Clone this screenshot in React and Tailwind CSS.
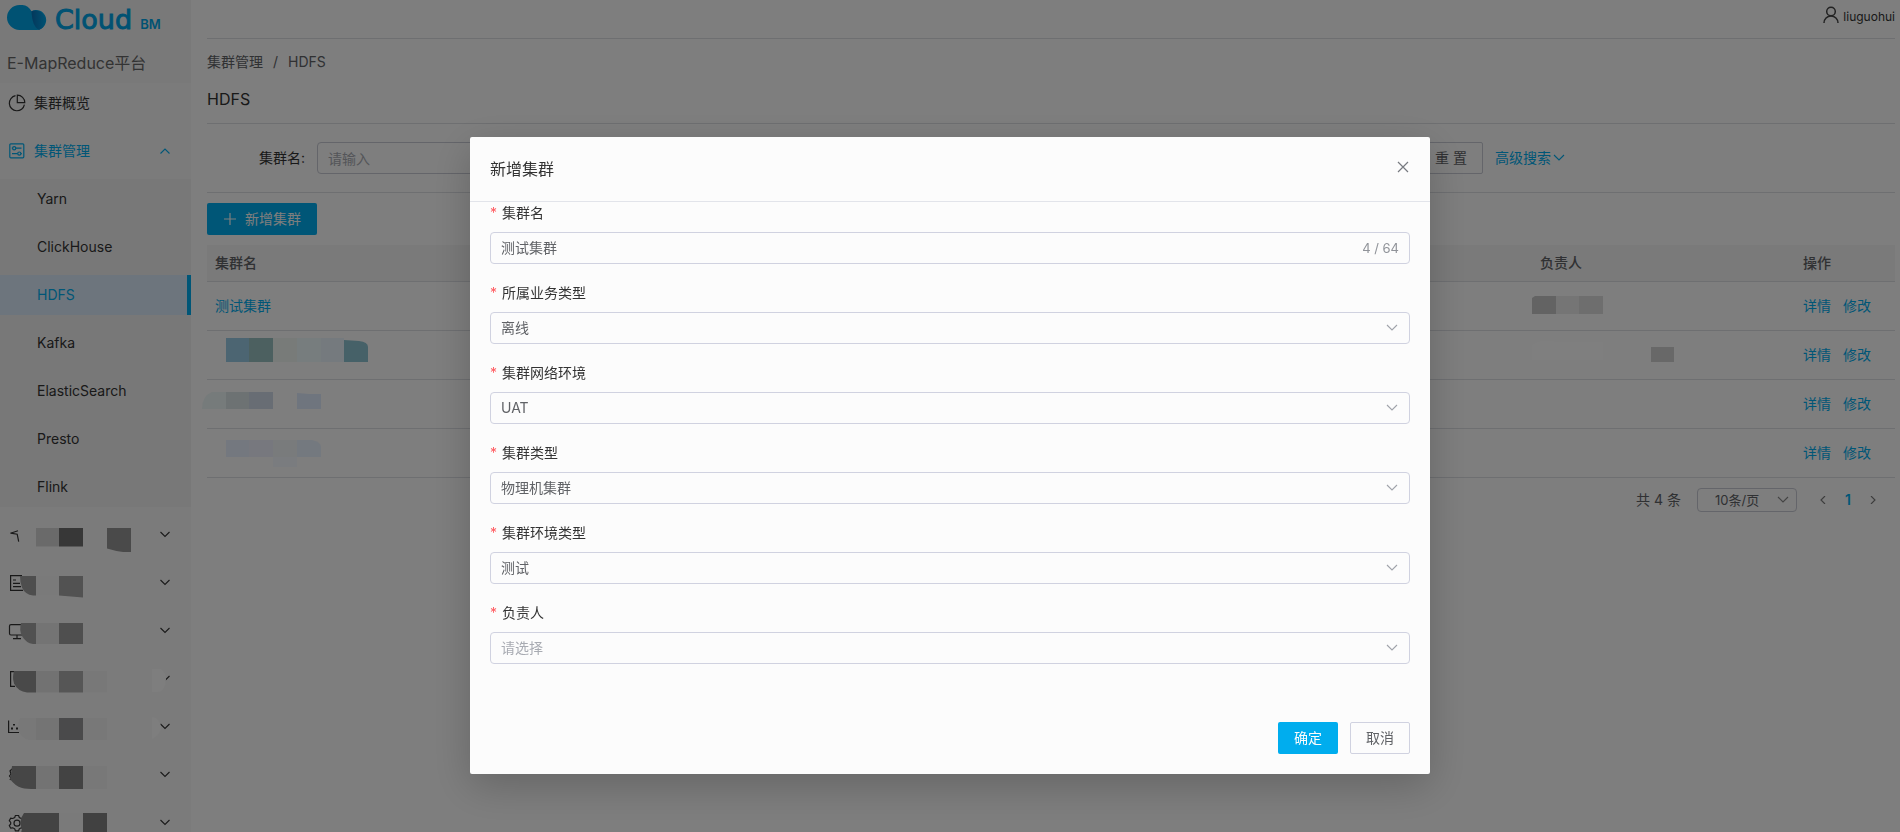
import React, { useState } from "react";

const subMenu = ["Yarn", "ClickHouse", "HDFS", "Kafka", "ElasticSearch", "Presto", "Flink"];

const rows = [1, 2, 3, 4];

const selectFields = [
  { id: "business", label: "所属业务类型", options: ["离线", "实时"] },
  { id: "network", label: "集群网络环境", options: ["UAT", "PROD"] },
  { id: "kind", label: "集群类型", options: ["物理机集群", "云主机集群"] },
  { id: "env", label: "集群环境类型", options: ["测试", "生产"] },
  { id: "owner", label: "负责人", options: [], placeholder: "请选择" },
];

function Chevron({ className, d = "M1 1l5 5 5-5" }) {
  return (
    <svg
      className={className}
      width="12"
      height="8"
      viewBox="0 0 12 8"
      fill="none"
      stroke="currentColor"
      strokeWidth="1.1"
      aria-hidden="true"
    >
      <path d={d} />
    </svg>
  );
}

function CloudMark() {
  return (
    <svg width="40" height="26" viewBox="0 0 40 26" aria-hidden="true">
      <defs>
        <linearGradient id="lobe" x1="0" y1="0" x2="1" y2="0">
          <stop offset="0" stopColor="#0870b8" />
          <stop offset="1" stopColor="#00a2e4" />
        </linearGradient>
      </defs>
      <path
        d="M12.500 0A12.500 12.500 0 0 0 12.500 25H30A10 10 0 1 0 24.500 6.200A12.500 12.500 0 0 0 12.500 0Z"
        fill="#00a5e6"
      />
      <path d="M24.500 6.200A10 10 0 1 1 32 25C27 22 25 16 24.500 6.200Z" fill="url(#lobe)" />
    </svg>
  );
}

function PieIcon() {
  return (
    <svg width="18" height="18" viewBox="0 0 18 18" fill="none" stroke="currentColor" strokeWidth="1.2" aria-hidden="true">
      <path d="M7.500 1.700A7.600 7.600 0 1 0 16.400 10.600" />
      <path d="M9.300 1.200V8.700H16.800A7.500 7.500 0 0 0 9.300 1.200Z" />
    </svg>
  );
}

function ControlIcon() {
  return (
    <svg width="18" height="18" viewBox="0 0 18 18" fill="none" stroke="currentColor" strokeWidth="1.2" aria-hidden="true">
      <rect x="1.800" y="1.800" width="14" height="14" rx="1" />
      <circle cx="6.200" cy="6.200" r="1.600" />
      <path d="M8 6.200h5.500M4 11.600h5.500M3.800 6.200h.8M13 11.600h.8" />
      <circle cx="11.300" cy="11.600" r="1.600" />
    </svg>
  );
}

// Obscured sidebar entries: partial icon plus grey tiles
const maskedItems = [
  {
    icon: <path d="M18 15.700L10.500 18.200L17.200 19.200L18.700 26.700" />,
    tiles: (
      <>
        <path d="M36 13h23v18.500H36z" fill="#d4d4d4" />
        <path d="M59 13h24v18.500H59z" fill="#6e6e6e" />
        <path d="M107 13h24v24h-8q-8-1-16-3.500z" fill="#949494" />
      </>
    ),
  },
  {
    icon: <path d="M22 12.600H10.600V27.400H23M13 17h3M13 20.300h7M13 23.700h8" />,
    tiles: (
      <>
        <path d="M20 13h16v19.500h-3q-8-1-11-8q-2-5-2-11.500z" fill="#9c9c9c" />
        <path d="M36 13h23v19.500H36z" fill="#f4f4f4" />
        <path d="M59 13h24v21.500l-24-2z" fill="#a4a4a4" />
      </>
    ),
  },
  {
    icon: <path d="M22 13.600H11q-1.500 0-1.500 1.500V22.500q0 1.500 1.500 1.500H23M17 24v3.600M13 27.600h8" />,
    tiles: (
      <>
        <path d="M21 12h15v21h-3q-7-1-11-8q-3-6-1-13z" fill="#a2a2a2" />
        <path d="M36 12h23v21H36z" fill="#e8e8e8" />
        <path d="M59 12h24v21H59z" fill="#9e9e9e" />
      </>
    ),
  },
  {
    icon: <path d="M14 12.600H10.600V27.400H15" />,
    tiles: (
      <>
        <path d="M14 12h22v21.500H27q-9-1-13-9q-2-6 0-12.500z" fill="#929292" />
        <path d="M36 12h23v21.500H36z" fill="#e4e4e4" />
        <path d="M59 12h24v21.500H59z" fill="#acacac" />
        <path d="M83 12h24v21.500H83z" fill="#f1f1f1" />
      </>
    ),
    cover: <path d="M-7 -6H2Q7 -2 7 5Q6 16 -1 17H-7Z" fill="#fcfcfc" />,
  },
  {
    icon: (
      <>
        <path d="M8.600 13.500V25.500H19" />
        <path d="M12 20.500v2M17 20.500v2M14 17v1.500" strokeWidth="2" />
      </>
    ),
    tiles: (
      <>
        <path d="M20 11h16v22H29q-9-2-11-12q0-6 2-10z" fill="#f0f0f0" />
        <path d="M36 11h23v22H36z" fill="#e8e8e8" />
        <path d="M59 11h24v22H59z" fill="#949496" />
        <path d="M83 11h24v22H83z" fill="#f0f0f0" />
      </>
    ),
    cover: <path d="M-7 -6Q1 -5 2 5Q0 13 -7 16Z" fill="#fcfcfc" />,
  },
  {
    icon: <path d="M12 14l-2 2 1 3-1.500 2 1.500 2-1 2" />,
    tiles: (
      <>
        <path d="M12 11h24v23q-10 0-14-1q-7-2-12-9l1-5z" fill="#8c8c8c" />
        <path d="M36 11h23v23H36z" fill="#e6e6e6" />
        <path d="M59 11h24v23H59z" fill="#868686" />
        <path d="M83 11h24v23H83z" fill="#f0f0f0" />
      </>
    ),
  },
  {
    icon: (
      <>
        <path d="M14.700 14.500L15.400 12.500H18.600L19.300 14.500L21.200 15.500L23.300 15.200L24.700 17.700L23.300 19.400V21L24.700 22.600L23.300 25.200L21.200 24.800L19.300 25.800L18.600 27.800H15.400L14.700 25.800L12.800 24.800L10.700 25.200L9.300 22.600L10.700 21V19.400L9.300 17.700L10.700 15.200L12.800 15.500Z" />
        <circle cx="17" cy="20.200" r="3" />
      </>
    ),
    tiles: (
      <>
        <path d="M24 10h35v30H22q-2-8 0-14q-4-8 2-16z" fill="#868686" />
        <path d="M59 10h24v30H59z" fill="#f5f5f5" />
        <path d="M83 10h24v30H83z" fill="#828282" />
      </>
    ),
  },
];

const nameTiles = {
  2: (
    <>
      <path d="M11 -4h24v24H11z" fill="#98cae4" />
      <path d="M34 -4h24v24H34z" fill="#98c0c0" />
      <path d="M58 -4h24v24H58z" fill="#f0f6f2" />
      <path d="M82 -4h24v24H82z" fill="#eefafc" />
      <path d="M106 -4h23v24h-23z" fill="#eaf4fc" />
      <path d="M129 -2l15 1q9 1 9 6v15h-24z" fill="#8cc2d0" />
    </>
  ),
  3: (
    <>
      <path d="M11 1v17H-13q0-13 10-17z" fill="#ecf6f6" />
      <path d="M11 1h24v17H11z" fill="#dae4e6" />
      <path d="M34 1h24v17H34z" fill="#d0dae8" />
      <path d="M82 2l12 1h12v15H82z" fill="#dfeafc" />
    </>
  ),
  4: (
    <>
      <path d="M11 0h24v17H11z" fill="#e8f0ff" />
      <path d="M34 0h24v17H34z" fill="#eff1fc" />
      <path d="M58 0h24v17H58z" fill="#f2f6f8" />
      <path d="M82 0h15q9 2 9 7v10H82z" fill="#e8f2fe" />
      <path d="M58 17h24v10H58z" fill="#f5f8ff" />
    </>
  ),
};

const ownerTiles = {
  1: (
    <>
      <path d="M-5 3h21v18H-8V5z" fill="#c6c6c6" />
      <path d="M16 3h23v18H16z" fill="#ebebeb" />
      <path d="M39 3h24v18H39z" fill="#dddddd" />
    </>
  ),
  2: (
    <>
      <path d="M-8 3q12-7 24-3h47v18H-8z" fill="#ffffff" />
      <path d="M111 5h23v15h-23z" fill="#d0d0d0" />
    </>
  ),
};

function Tiles({ children }) {
  return (
    <svg className="block overflow-visible" width="160" height="26" viewBox="0 0 160 26" aria-hidden="true">
      {children}
    </svg>
  );
}

function Sidebar() {
  return (
    <aside className="h-screen w-[191px] shrink-0 overflow-hidden bg-[#f7f7f7] text-sm text-[#333]">
      <div className="h-[83px] bg-[#f3f3f3] pl-[7px]">
        <a href="#home" className="flex h-10 items-start gap-2 pt-[5px] text-[#00a5e6]">
          <CloudMark />
          <span className="flex items-baseline gap-2">
            <span className="font-['DejaVu_Sans'] text-[27px] leading-[30px] [-webkit-text-stroke:1px_#00a5e6]">Cloud</span>
            <span className="text-[13px] font-semibold">BM</span>
          </span>
        </a>
        <div className="pt-[11px] text-base leading-6 text-[#666]">E-MapReduce平台</div>
      </div>
      <nav className="flex flex-col gap-2">
        <a href="#overview" className="flex h-10 items-center gap-2 pl-2">
          <PieIcon />
          集群概览
        </a>
        <button type="button" className="flex h-10 w-full items-center gap-2 pr-5 pl-2 text-[#00adee]">
          <ControlIcon />
          集群管理
          <Chevron className="ml-auto" d="M1.500 6.500l4.500-4.500 4.500 4.500" />
        </button>
        <ul className="flex flex-col gap-2 bg-[#f1f1f1]">
          {subMenu.map((name) => (
            <li key={name}>
              <a
                href={`#${name}`}
                className={
                  name === "HDFS"
                    ? "flex h-10 items-center border-r-4 border-[#00adee] bg-[#dbebfa] pl-[37px] text-[#00adee]"
                    : "flex h-10 items-center pl-[37px]"
                }
              >
                {name}
              </a>
            </li>
          ))}
        </ul>
        {maskedItems.map((item, i) => (
          <button key={i} type="button" aria-label={`菜单 ${i + 1}`} className="flex h-10 w-full shrink-0 items-center justify-between pr-5">
            <svg width="136" height="40" viewBox="0 0 136 40" aria-hidden="true">
              <g fill="none" stroke="#333" strokeWidth="1.200">
                {item.icon}
              </g>
              {item.tiles}
            </svg>
            <svg className="overflow-visible" width="12" height="8" viewBox="0 0 12 8" fill="none" aria-hidden="true">
              <path d="M1.500 1l4.500 4.500 4.500-4.500" stroke="#333" strokeWidth="1.100" />
              {item.cover}
            </svg>
          </button>
        ))}
      </nav>
    </aside>
  );
}

function ClusterTable() {
  return (
    <table className="mt-[10px] w-full table-fixed text-left">
      <colgroup>
        <col />
        <col className="w-[263px]" />
        <col className="w-[100px]" />
      </colgroup>
      <thead className="bg-[#f4f4f4] text-[#606266]">
        <tr className="h-9 border-b border-[#dcdee3]">
          <th className="px-2 font-medium">集群名</th>
          <th className="px-2 font-medium">负责人</th>
          <th className="px-2 font-medium">操作</th>
        </tr>
      </thead>
      <tbody>
        {rows.map((row) => (
          <tr key={row} className="h-[49px] border-b border-[#dcdee3]">
            <td className="px-2">
              {row === 1 ? (
                <a href="#cluster" className="text-[#00adee]">
                  测试集群
                </a>
              ) : (
                <Tiles>{nameTiles[row]}</Tiles>
              )}
            </td>
            <td className="px-2">{ownerTiles[row] && <Tiles>{ownerTiles[row]}</Tiles>}</td>
            <td className="px-2">
              <div className="flex gap-3 text-[#00adee]">
                <a href="#detail">详情</a>
                <a href="#edit">修改</a>
              </div>
            </td>
          </tr>
        ))}
      </tbody>
    </table>
  );
}

function Content() {
  return (
    <main className="min-w-0 flex-1 pr-[5px] pl-4 text-sm text-[#606266]">
      <header className="flex h-[39px] items-start justify-end gap-1 border-b border-[#dcdee3] pt-[6px] text-xs text-[#333]">
        <svg width="16" height="18" viewBox="0 0 16 18" fill="none" stroke="#444" strokeWidth="1.500" aria-hidden="true">
          <circle cx="8" cy="5.500" r="4.300" />
          <path d="M1 17a7 7 0 0 1 14 0" />
        </svg>
        <span className="leading-[21px]">liuguohui</span>
      </header>

      <nav className="flex gap-[10px] pt-3 leading-[22px]" aria-label="breadcrumb">
        <a href="#clusters">集群管理</a>
        <span>/</span>
        <span>HDFS</span>
      </nav>
      <h1 className="border-b border-[#dcdee3] pt-[14px] pb-3 text-base leading-6 text-[#333]">HDFS</h1>

      <form className="flex h-[69px] items-center border-b border-[#dcdee3] pl-[52px]">
        <label htmlFor="keyword" className="mr-3 text-[#333]">
          集群名:
        </label>
        <input
          id="keyword"
          placeholder="请输入"
          className="h-8 w-80 rounded border border-[#c8cad4] bg-transparent px-[10px] placeholder:text-[#a8abb2]"
        />
        <div className="mr-[330px] ml-auto flex items-center gap-3">
          <button type="reset" className="h-8 rounded-xs border border-[#c8cad4] px-[15px]">
            重 置
          </button>
          <button type="button" className="flex items-center gap-[2px] text-[#00adee]">
            高级搜索
            <Chevron />
          </button>
        </div>
      </form>

      <button type="button" className="mt-[10px] flex h-8 items-center gap-2 rounded-xs bg-[#00adee] px-4 text-[#fcfcfc]">
        <svg width="14" height="14" viewBox="0 0 14 14" stroke="currentColor" strokeWidth="1.200" aria-hidden="true">
          <path d="M7 1v12M1 7h12" />
        </svg>
        新增集群
      </button>

      <ClusterTable />

      <div className="flex h-[45px] items-center justify-end pr-4">
        <span>共 4 条</span>
        <div className="relative mr-5 ml-4">
          <select aria-label="每页条数" className="h-6 w-[100px] appearance-none rounded border border-[#c8cad4] pl-[17px] text-[13px]">
            <option>10条/页</option>
          </select>
          <Chevron className="pointer-events-none absolute top-2 right-2 text-[#888]" />
        </div>
        <button type="button" aria-label="上一页" className="text-[#777]">
          <Chevron d="M8 0L4 4l4 4" />
        </button>
        <button type="button" className="w-[38px] text-center font-semibold text-[#00adee]">
          1
        </button>
        <button type="button" aria-label="下一页" className="text-[#777]">
          <Chevron d="M4 0l4 4-4 4" />
        </button>
      </div>
    </main>
  );
}

function FieldLabel({ htmlFor, children }) {
  return (
    <label htmlFor={htmlFor} className="flex gap-1 pb-2 leading-[22px] text-[#333]">
      <span className="w-2 text-[#ff5a5f]">*</span>
      {children}
    </label>
  );
}

function ClusterDialog({ onClose }) {
  const [name, setName] = useState("测试集群");

  return (
    <div className="fixed inset-0 flex items-start justify-center bg-black/50 pt-[137px]">
      <div
        role="dialog"
        aria-modal="true"
        aria-labelledby="dialog-title"
        className="w-[960px] rounded-xs bg-[#fcfcfc] text-sm text-[#606266] shadow-[0_12px_40px_rgba(0,0,0,0.2)]"
      >
        <div className="flex h-[65px] items-center justify-between border-b border-[#e2e4ea] px-5">
          <h2 id="dialog-title" className="text-base text-[#333]">
            新增集群
          </h2>
          <button type="button" aria-label="关闭" onClick={onClose} className="pr-px pb-1 text-[#777a80]">
            <svg width="12" height="12" viewBox="0 0 12 12" stroke="currentColor" strokeWidth="1.200" aria-hidden="true">
              <path d="M1 1l10 10M11 1L1 11" />
            </svg>
          </button>
        </div>

        <form className="flex flex-col gap-[18px] px-5">
          <div>
            <FieldLabel htmlFor="name">集群名</FieldLabel>
            <div className="flex h-8 items-center rounded border border-[#d0d2e0] px-[10px]">
              <input
                id="name"
                value={name}
                maxLength={64}
                onChange={(e) => setName(e.target.value)}
                className="min-w-0 flex-1 bg-transparent outline-none"
              />
              <span className="text-[13px] text-[#909399]">{name.length} / 64</span>
            </div>
          </div>
          {selectFields.map((field) => (
            <div key={field.id}>
              <FieldLabel htmlFor={field.id}>{field.label}</FieldLabel>
              <div className="relative">
                <select
                  id={field.id}
                  className={
                    field.placeholder
                      ? "h-8 w-full appearance-none rounded border border-[#d0d2e0] px-[10px] text-[#a8abb2]"
                      : "h-8 w-full appearance-none rounded border border-[#d0d2e0] px-[10px]"
                  }
                >
                  {field.placeholder && <option>{field.placeholder}</option>}
                  {field.options.map((o) => (
                    <option key={o}>{o}</option>
                  ))}
                </select>
                <Chevron className="pointer-events-none absolute top-3 right-3 text-[#a0a3aa]" />
              </div>
            </div>
          ))}
        </form>

        <div className="flex justify-end gap-3 px-5 pt-[58px] pb-5">
          <button type="button" className="h-8 w-[60px] rounded-xs bg-[#00adee] text-[#fcfcfc]">
            确定
          </button>
          <button type="button" onClick={onClose} className="h-8 w-[60px] rounded-xs border border-[#d0d2e0]">
            取消
          </button>
        </div>
      </div>
    </div>
  );
}

export default function App() {
  const [open, setOpen] = useState(true);

  return (
    <div className="flex min-h-screen bg-[#fcfcfc] font-[Inter,'Noto_Sans_CJK_SC',sans-serif]">
      <Sidebar />
      <Content />
      {open && <ClusterDialog onClose={() => setOpen(false)} />}
    </div>
  );
}
